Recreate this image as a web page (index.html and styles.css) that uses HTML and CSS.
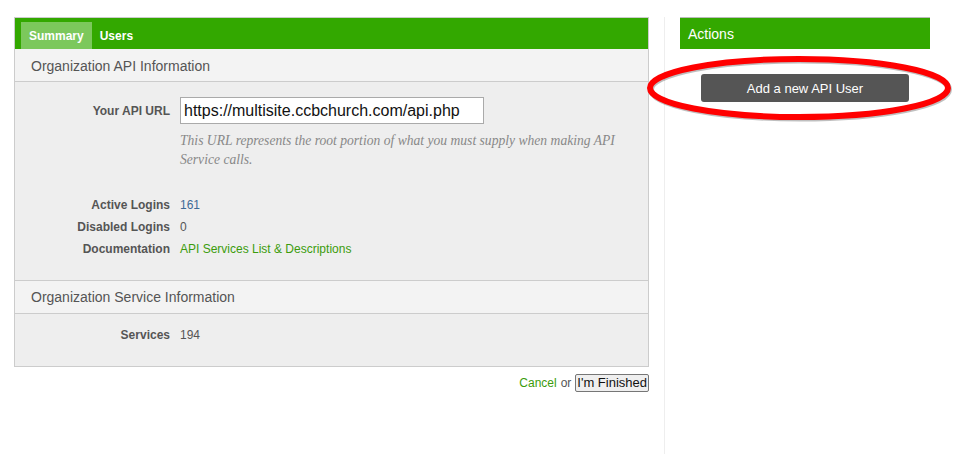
FILE: index.html
```html
<!DOCTYPE html>
<html>
<head>
<meta charset="utf-8">
<link rel="stylesheet" href="styles.css">
</head>
<body>
<div class="page">
  <div class="main">
    <div class="panel">
      <div class="tabs">
        <span class="tab active">Summary</span>
        <span class="tab">Users</span>
      </div>
      <div class="sec-head first">Organization API Information</div>
      <div class="sec-body body1">
        <div class="row input-row">
          <div class="label">Your API URL</div>
          <div class="value"><input class="url" type="text" value="https://multisite.ccbchurch.com/api.php"></div>
        </div>
        <div class="row helper-row">
          <div class="label"></div>
          <div class="helper">This URL represents the root portion of what you must supply when making API Service calls.</div>
        </div>
        <div class="stats">
          <div class="row stat">
            <div class="label">Active Logins</div>
            <div class="value num-blue">161</div>
          </div>
          <div class="row stat">
            <div class="label">Disabled Logins</div>
            <div class="value">0</div>
          </div>
          <div class="row stat">
            <div class="label">Documentation</div>
            <div class="value"><a class="link" href="#">API Services List &amp; Descriptions</a></div>
          </div>
        </div>
      </div>
      <div class="sec-head second">Organization Service Information</div>
      <div class="sec-body body2">
        <div class="row stat">
          <div class="label">Services</div>
          <div class="value">194</div>
        </div>
      </div>
    </div>
    <div class="footer">
      <a class="link cancel" href="#">Cancel</a><span class="or">or</span><button class="finish">I'm Finished</button>
    </div>
  </div>
  <div class="sidebar">
    <div class="side-head">Actions</div>
    <div class="side-body">
      <button class="add-btn">Add a new API User</button>
      <svg class="circle" width="314" height="76" viewBox="0 0 314 76">
        <ellipse cx="155" cy="37" rx="149" ry="29" fill="none" stroke="rgba(0,0,0,0.25)" stroke-width="6" transform="translate(1,1.5)"/>
        <ellipse cx="155" cy="37" rx="149" ry="29" fill="none" stroke="#f00" stroke-width="6"/>
      </svg>
    </div>
  </div>
</div>
</body>
</html>
```

FILE: styles.css
```css
* { box-sizing: border-box; }
html, body { margin: 0; padding: 0; background: #fff; }
body {
  font-family: "Liberation Sans", Arial, sans-serif;
  font-size: 12px;
  color: #555;
}
.page {
  display: flex;
  align-items: flex-start;
  padding: 17px 0 0 14px;
  height: 454px;
}
.main { width: 635px; flex: none; }
.panel {
  border: 1px solid #ccc;
  background: #eee;
}
.tabs {
  height: 31px;
  background: #33a800;
  display: flex;
  align-items: flex-end;
  padding-left: 6px;
}
.tab {
  height: 27px;
  line-height: 28px;
  padding: 0 8px;
  color: #fff;
  font-weight: bold;
  font-size: 12px;
}
.tab.active { background: #7cc85c; }
.sec-head {
  height: 33px;
  line-height: 34px;
  background: #f3f3f3;
  border-bottom: 1px solid #ccc;
  padding-left: 16px;
  font-size: 14px;
  color: #555;
}
.sec-head.second { border-top: 1px solid #ccc; height: 34px; line-height: 32px; }
.body1 { padding: 15px 0 20px; }
.body2 { padding: 10px 0 20px; }
.row {
  display: grid;
  grid-template-columns: 155px 1fr;
  column-gap: 10px;
  align-items: center;
}
.label {
  text-align: right;
  font-weight: bold;
  color: #555;
}
.url {
  display: block;
  width: 304px;
  height: 27px;
  border: 1px solid #aaa;
  background: #fff;
  padding: 0 3px;
  font-family: "Liberation Sans", Arial, sans-serif;
  font-size: 16px;
  color: #111;
  outline: none;
}
.helper-row { margin-top: 7px; }
.helper {
  font-family: "Liberation Serif", Georgia, serif;
  font-style: italic;
  font-size: 13.6px;
  line-height: 19px;
  color: #888;
  max-width: 445px;
}
.stats { margin-top: 25px; }
.stat { height: 22px; line-height: 22px; }
.value { color: #555; }
.num-blue { color: #3f6a96; }
.link { color: #3b9c0c; text-decoration: none; }
.footer {
  display: flex;
  justify-content: flex-end;
  align-items: center;
  margin-top: 7px;
  font-size: 12px;
}
.or { margin: 0 4px; color: #555; }
.finish {
  height: 18px;
  padding: 0 1px;
  font-family: "Liberation Sans", Arial, sans-serif;
  font-size: 13px;
  color: #111;
  background: #efefef;
  border: 1px solid #767676;
  border-radius: 2px;
  line-height: 16px;
}
.sidebar {
  margin-left: 15px;
  border-left: 1px solid #eee;
  padding-left: 15px;
  width: 266px;
  flex: none;
  height: 437px;
}
.side-head {
  width: 250px;
  height: 32px;
  border-top: 1px solid #bbb;
  background: #33a800;
  color: #fff;
  font-size: 14px;
  line-height: 33px;
  padding-left: 8px;
}
.side-body {
  position: relative;
  width: 250px;
  display: flex;
  justify-content: center;
  padding-top: 25px;
}
.add-btn {
  width: 208px;
  height: 28px;
  background: #555;
  border: none;
  border-radius: 3px;
  color: #fff;
  font-family: "Liberation Sans", Arial, sans-serif;
  font-size: 13px;
}
.circle {
  position: absolute;
  left: -36px;
  top: 2px;
  pointer-events: none;
}
```
